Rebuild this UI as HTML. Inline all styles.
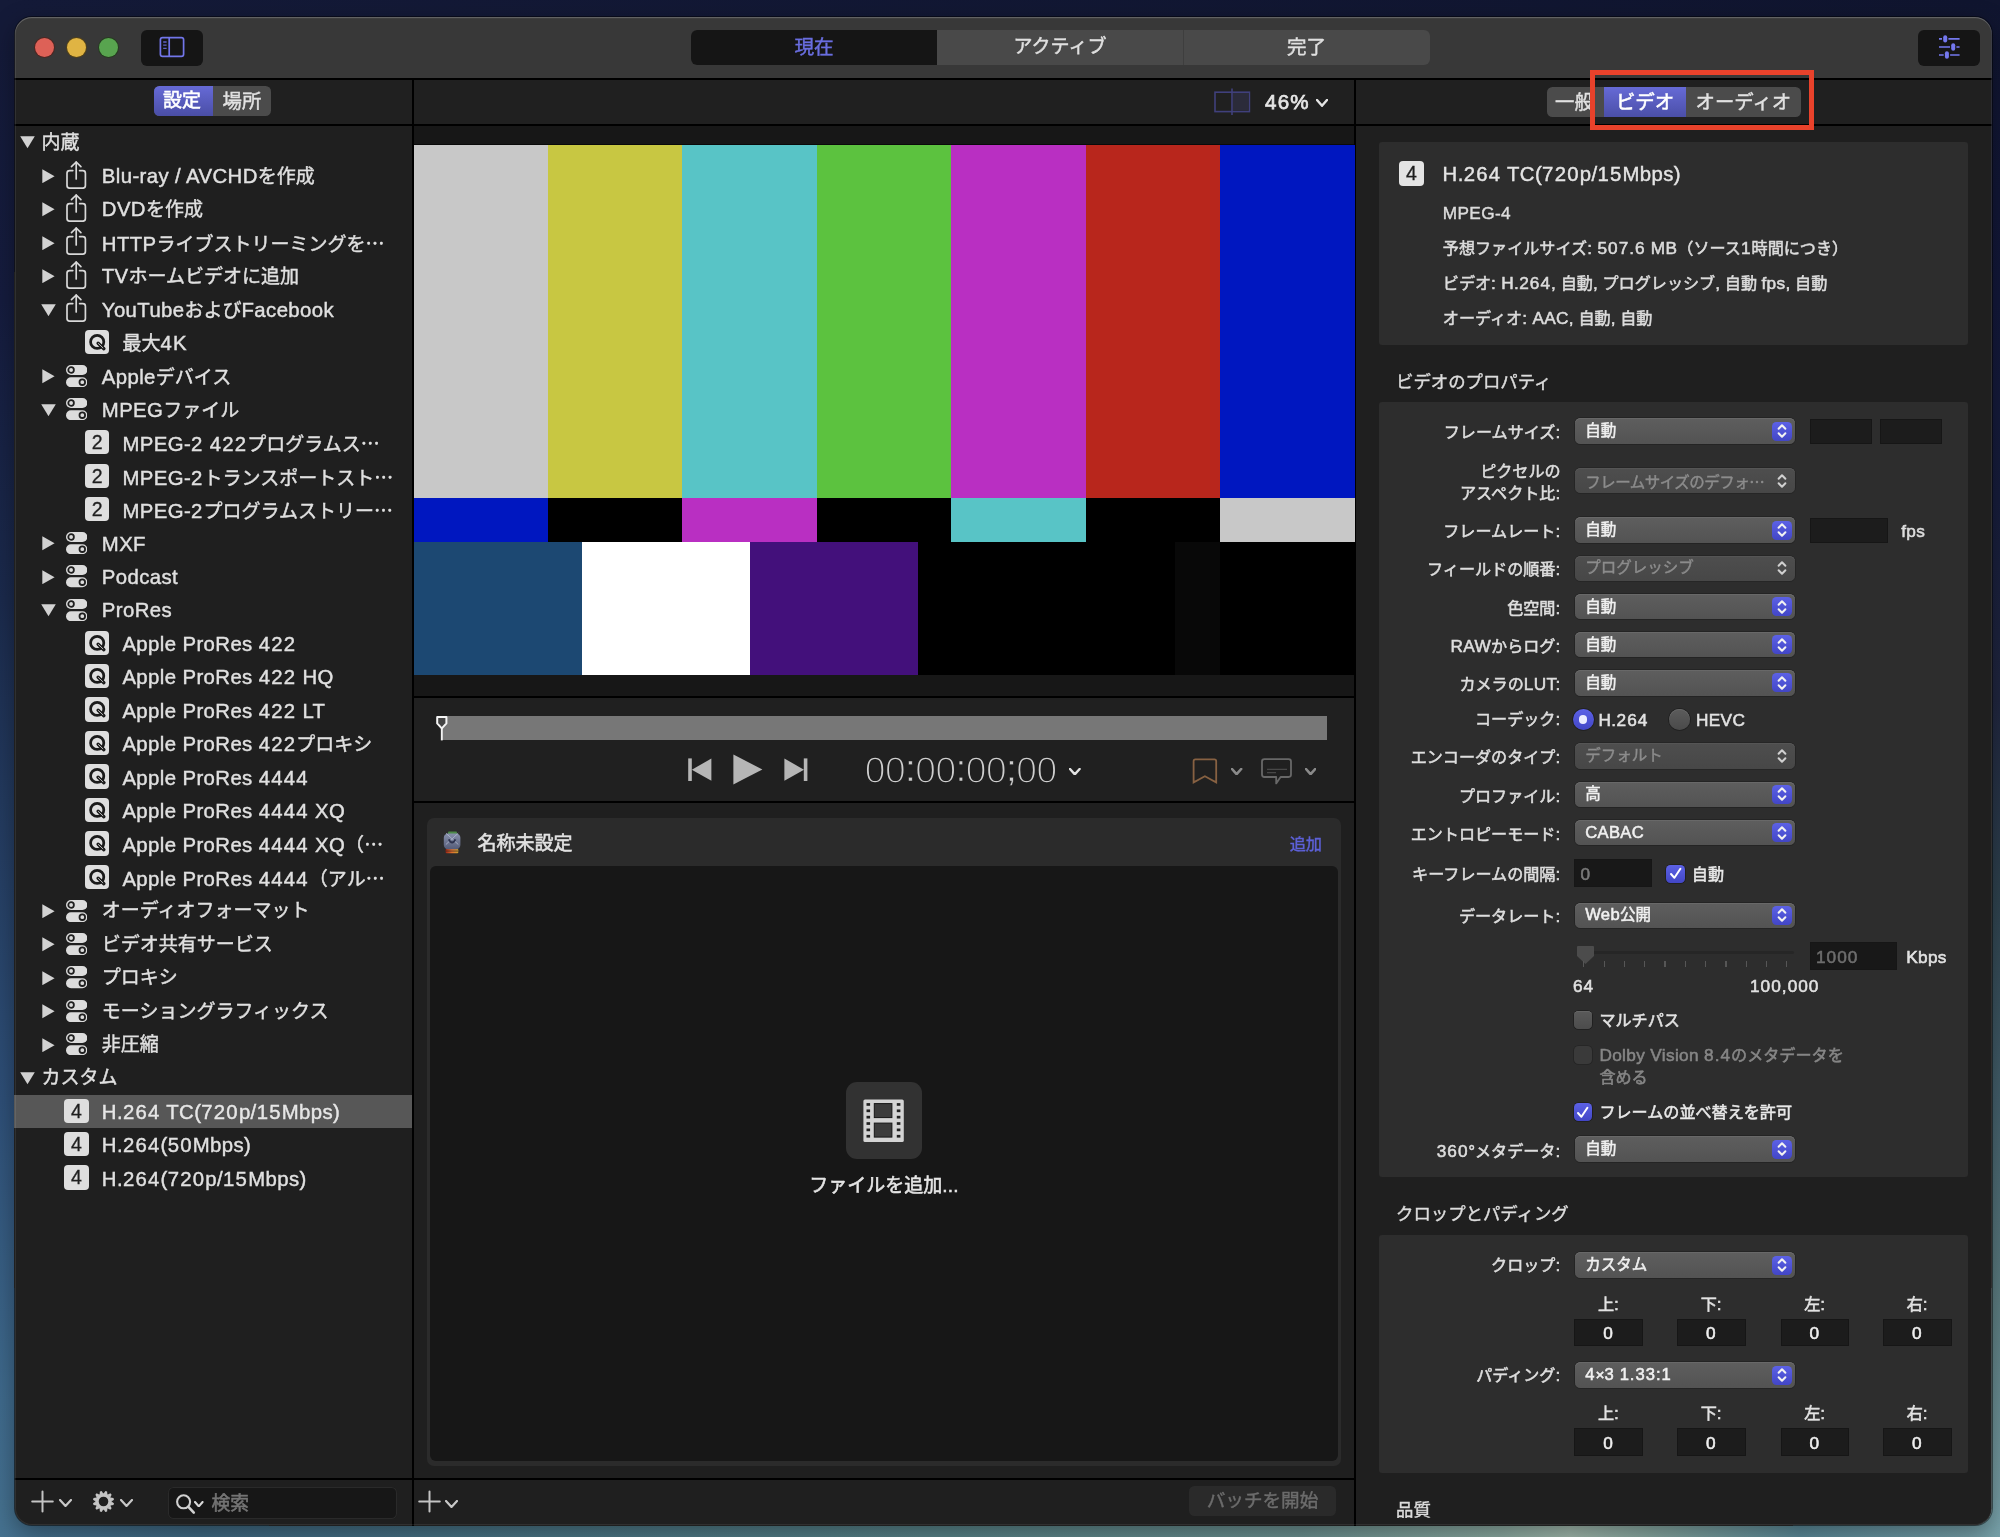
<!DOCTYPE html>
<html lang="ja"><head><meta charset="utf-8"><title>Compressor</title><style>
html,body{margin:0;padding:0;background:#14193a;}
body{width:2000px;height:1537px;overflow:hidden;position:relative;font-family:"Liberation Sans","Noto Sans CJK JP",sans-serif;}
#wall{position:absolute;left:0;top:0;width:2000px;height:1537px;
 background:linear-gradient(to bottom,#141a38 0px,#151c3e 300px,#1b2a4c 600px,#233a5e 800px,#2e4f77 1100px,#3f6a8c 1400px,#44708f 1537px);}
#wallt{position:absolute;left:0;top:0;width:2000px;height:40px;background:linear-gradient(to right,#141a38,#10152f);}
#wallr{position:absolute;left:1960px;top:0;width:40px;height:1537px;background:linear-gradient(to bottom,#10152f 0px,#13183a 300px,#171d3c 500px,#20263f 700px,#2f434f 900px,#44606c 1100px,#5d7e82 1300px,#7ba3aa 1537px);}
#wallb{position:absolute;left:0;top:1500px;width:2000px;height:37px;background:linear-gradient(to right,#45718f 0px,#3e6882 200px,#4a7585 550px,#588388 950px,#6b9090 1300px,#8aa9a0 1500px,#a0b8ac 1570px,#86a7a0 1650px,#5b8a99 1800px,#78a2aa 2000px);}
#shadow{position:absolute;left:14.7px;top:17px;width:1977px;height:1508.2px;border-radius:17px;box-shadow:0 8px 24px rgba(0,0,0,.36),0 0 0 1px rgba(0,0,0,.45);}
#win{will-change:transform;position:absolute;left:0;top:0;width:2000px;height:1537px;clip-path:inset(17px 8.3px 11.8px 14.7px round 17px);background:#1f1f1f;}
#win div,#win svg{position:absolute;}
#win span{position:static;}
#edge{position:absolute;left:14.7px;top:17px;width:1977px;height:1508.2px;border-radius:17px;box-shadow:inset 0 1.2px 0 rgba(255,255,255,.15),inset 0 0 0 1px rgba(255,255,255,.08);pointer-events:none;}
.t{white-space:nowrap;-webkit-text-stroke:.42px currentColor;}
.a{font-size:1.07em;letter-spacing:.02em;}
.a i{font-style:normal;letter-spacing:.06em;}
.e{font-family:"Noto Sans CJK JP",sans-serif;}
.m{-webkit-text-stroke:.55px currentColor;}
.tc{-webkit-text-stroke:1.5px #202020;}
.tc b{font-weight:normal;position:relative;top:-2.2px;-webkit-text-stroke:.5px #202020;}
.b{-webkit-text-stroke:.75px currentColor;}
.bd{text-align:center;}
.bn{display:block;font-size:19.5px;line-height:25.4px;color:#1e1e1e;-webkit-text-stroke:.3px #1e1e1e;text-align:center;width:100%;}
</style></head><body>
<div id="wall"></div><div id="wallt"></div><div id="wallr"></div><div id="wallb"></div><div id="shadow"></div>
<div id="win">
<div style="left:0px;top:17px;width:2000px;height:61.2px;background:#383838;"></div>
<div style="left:0px;top:78px;width:2000px;height:1.7px;background:#000;"></div>
<div style="left:0px;top:79.7px;width:2000px;height:44.4px;background:#202020;"></div>
<div style="left:0px;top:124px;width:2000px;height:1.7px;background:#000;"></div>
<div style="left:412px;top:79.7px;width:1.7px;height:1446px;background:#000;"></div>
<div style="left:1354.4px;top:79.7px;width:1.7px;height:1446px;background:#000;"></div>
<div style="left:34.6px;top:38.1px;width:19.4px;height:19.4px;background:#dd6157;border-radius:50%;box-shadow:0 0 0 1px #4e2622;"></div>
<div style="left:66.5px;top:38.1px;width:19.4px;height:19.4px;background:#e0b443;border-radius:50%;box-shadow:0 0 0 1px #52421a;"></div>
<div style="left:98.5px;top:38.1px;width:19.4px;height:19.4px;background:#58a44f;border-radius:50%;box-shadow:0 0 0 1px #263c20;"></div>
<div style="left:141px;top:30.3px;width:62px;height:35.8px;background:#151515;border-radius:6px;"></div>
<svg style="left:159px;top:36px;" width="26" height="22" viewBox="0 0 26 22"><g fill="none" stroke="#7276ea" stroke-width="1.7"><rect x="1.4" y="1.6" width="23.2" height="18.8" rx="2.2"/><path d="M10.2 1.6 V20.4"/></g><g stroke="#5f63c8" stroke-width="1.3"><path d="M4.2 6 H7.6 M4.2 9.2 H7.6 M4.2 12.4 H7.6"/></g></svg>
<div style="left:690.8px;top:30px;width:739.4px;height:35.4px;background:#494949;border-radius:6px;overflow:hidden;"><div style="left:0;top:0;width:246.4px;height:36px;background:#151515"></div><div style="left:492.4px;top:0;width:1px;height:36px;background:#3e3e3e"></div></div>
<div class="t " style="left:614px;width:400px;text-align:center;top:31.8px;height:30px;line-height:30px;font-size:19.6px;color:#6a6ee0;">現在</div>
<div class="t " style="left:860px;width:400px;text-align:center;top:32px;height:30px;line-height:30px;font-size:19px;color:#e0e0e0;">アクティブ</div>
<div class="t " style="left:1106.5px;width:400px;text-align:center;top:31.8px;height:30px;line-height:30px;font-size:19.6px;color:#e0e0e0;">完了</div>
<div style="left:1918px;top:30.2px;width:62px;height:35.8px;background:#151515;border-radius:6px;"></div>
<svg style="left:1938.8px;top:33.9px;" width="21" height="27" viewBox="0 0 21 27"><g stroke="#7478ee" stroke-width="1.7" stroke-linecap="butt"><path d="M0 4.9 H3 M9.4 4.9 H20.6"/><path d="M0 13 H11 M17.4 13 H20.6"/><path d="M0 21 H4.7 M11.1 21 H20.6"/></g><rect x="4.2" y="1.2" width="4" height="7.4" rx="2" fill="#7478ee"/><rect x="12.2" y="9.3" width="4" height="7.4" rx="2" fill="#7478ee"/><rect x="5.9" y="17.3" width="4" height="7.4" rx="2" fill="#7478ee"/></svg>
<div style="left:154px;top:86px;width:117px;height:30px;background:#4b4b4b;border-radius:5.5px;overflow:hidden;"><div style="left:0;top:0;width:59.2px;height:30px;background:linear-gradient(#666ad6,#4a4ea6)"></div></div>
<div class="t m" style="left:142px;width:80px;text-align:center;top:85.6px;height:30px;line-height:30px;font-size:19px;color:#ffffff;">設定</div>
<div class="t " style="left:202px;width:80px;text-align:center;top:85.8px;height:30px;line-height:30px;font-size:19.4px;color:#e2e2e2;">場所</div>
<svg style="left:20.2px;top:136.4px;" width="15" height="12.4" viewBox="0 0 15 12.4"><path d="M0.2 0.2 L14.8 0.2 L7.5 12.2Z" fill="#d2d2d2"/></svg>
<div class="t " style="left:41.6px;top:127.6px;height:30px;line-height:30px;font-size:19px;color:#e0e0e0;">内蔵</div>
<svg style="left:42.4px;top:168.82px;" width="13" height="14.4" viewBox="0 0 13 14.4"><path d="M0.3 0.2 L12.6 7.2 L0.3 14.2Z" fill="#d2d2d2"/></svg>
<svg style="left:65.9px;top:160.62px;" width="21" height="28.4" viewBox="0 0 21 28.4"><g fill="none" stroke="#d8d8d8" stroke-width="1.7" stroke-linecap="round" stroke-linejoin="round"><path d="M6.8 9.6 H3.6 Q1 9.6 1 12.2 V24.6 Q1 27.2 3.6 27.2 H16.8 Q19.4 27.2 19.4 24.6 V12.2 Q19.4 9.6 16.8 9.6 H13.6"/><path d="M10.2 1.2 V18"/><path d="M5.5 5.6 L10.2 1 L14.9 5.6"/></g></svg>
<div class="t " style="left:101.8px;top:161.02px;height:30px;line-height:30px;font-size:19px;color:#e0e0e0;"><span class="a">Blu-ray / AVCHD</span>を作成</div>
<svg style="left:42.4px;top:202.24px;" width="13" height="14.4" viewBox="0 0 13 14.4"><path d="M0.3 0.2 L12.6 7.2 L0.3 14.2Z" fill="#d2d2d2"/></svg>
<svg style="left:65.9px;top:194.04px;" width="21" height="28.4" viewBox="0 0 21 28.4"><g fill="none" stroke="#d8d8d8" stroke-width="1.7" stroke-linecap="round" stroke-linejoin="round"><path d="M6.8 9.6 H3.6 Q1 9.6 1 12.2 V24.6 Q1 27.2 3.6 27.2 H16.8 Q19.4 27.2 19.4 24.6 V12.2 Q19.4 9.6 16.8 9.6 H13.6"/><path d="M10.2 1.2 V18"/><path d="M5.5 5.6 L10.2 1 L14.9 5.6"/></g></svg>
<div class="t " style="left:101.8px;top:194.44px;height:30px;line-height:30px;font-size:19px;color:#e0e0e0;"><span class="a">DVD</span>を作成</div>
<svg style="left:42.4px;top:235.66px;" width="13" height="14.4" viewBox="0 0 13 14.4"><path d="M0.3 0.2 L12.6 7.2 L0.3 14.2Z" fill="#d2d2d2"/></svg>
<svg style="left:65.9px;top:227.46px;" width="21" height="28.4" viewBox="0 0 21 28.4"><g fill="none" stroke="#d8d8d8" stroke-width="1.7" stroke-linecap="round" stroke-linejoin="round"><path d="M6.8 9.6 H3.6 Q1 9.6 1 12.2 V24.6 Q1 27.2 3.6 27.2 H16.8 Q19.4 27.2 19.4 24.6 V12.2 Q19.4 9.6 16.8 9.6 H13.6"/><path d="M10.2 1.2 V18"/><path d="M5.5 5.6 L10.2 1 L14.9 5.6"/></g></svg>
<div class="t " style="left:101.8px;top:227.86px;height:30px;line-height:30px;font-size:19px;color:#e0e0e0;"><span class="a">HTTP</span>ライブストリーミングを<span class="e">…</span></div>
<svg style="left:42.4px;top:269.08px;" width="13" height="14.4" viewBox="0 0 13 14.4"><path d="M0.3 0.2 L12.6 7.2 L0.3 14.2Z" fill="#d2d2d2"/></svg>
<svg style="left:65.9px;top:260.88px;" width="21" height="28.4" viewBox="0 0 21 28.4"><g fill="none" stroke="#d8d8d8" stroke-width="1.7" stroke-linecap="round" stroke-linejoin="round"><path d="M6.8 9.6 H3.6 Q1 9.6 1 12.2 V24.6 Q1 27.2 3.6 27.2 H16.8 Q19.4 27.2 19.4 24.6 V12.2 Q19.4 9.6 16.8 9.6 H13.6"/><path d="M10.2 1.2 V18"/><path d="M5.5 5.6 L10.2 1 L14.9 5.6"/></g></svg>
<div class="t " style="left:101.8px;top:261.28px;height:30px;line-height:30px;font-size:19px;color:#e0e0e0;"><span class="a">TV</span>ホームビデオに追加</div>
<svg style="left:41.2px;top:303.7px;" width="15" height="12.4" viewBox="0 0 15 12.4"><path d="M0.2 0.2 L14.8 0.2 L7.5 12.2Z" fill="#d2d2d2"/></svg>
<svg style="left:65.9px;top:294.3px;" width="21" height="28.4" viewBox="0 0 21 28.4"><g fill="none" stroke="#d8d8d8" stroke-width="1.7" stroke-linecap="round" stroke-linejoin="round"><path d="M6.8 9.6 H3.6 Q1 9.6 1 12.2 V24.6 Q1 27.2 3.6 27.2 H16.8 Q19.4 27.2 19.4 24.6 V12.2 Q19.4 9.6 16.8 9.6 H13.6"/><path d="M10.2 1.2 V18"/><path d="M5.5 5.6 L10.2 1 L14.9 5.6"/></g></svg>
<div class="t " style="left:101.8px;top:294.7px;height:30px;line-height:30px;font-size:19px;color:#e0e0e0;"><span class="a">YouTube</span>および<span class="a">Facebook</span></div>
<div style="left:85px;top:329.82px;width:24.4px;height:24.4px;background:#dedede;border-radius:4px;"><svg width="24.4" height="24.4" viewBox="0 0 24 24" style="left:0;top:0"><circle cx="12" cy="11.7" r="6.5" fill="none" stroke="#1a1a1a" stroke-width="2.7"/><path d="M12.9 13 L18.6 18.4" stroke="#1a1a1a" stroke-width="3.3" stroke-linecap="round"/><path d="M13.2 13.3 L17.6 17.5" stroke="#dedede" stroke-width="0.8" stroke-linecap="round"/></svg></div>
<div class="t " style="left:122.4px;top:328.12px;height:30px;line-height:30px;font-size:19px;color:#e0e0e0;">最大<span class="a"><i>4</i>K</span></div>
<svg style="left:42.4px;top:369.34px;" width="13" height="14.4" viewBox="0 0 13 14.4"><path d="M0.3 0.2 L12.6 7.2 L0.3 14.2Z" fill="#d2d2d2"/></svg>
<svg style="left:65.8px;top:364.84px;" width="21.4" height="22.2" viewBox="0 0 21.4 22.2"><rect x="0" y="0" width="21.4" height="10" rx="5" fill="#dcdcdc"/><rect x="0" y="12.2" width="21.4" height="10" rx="5" fill="#dcdcdc"/><circle cx="5.1" cy="5" r="2.8" fill="none" stroke="#1f1f1f" stroke-width="1.8"/><circle cx="16.3" cy="17.2" r="2.8" fill="none" stroke="#1f1f1f" stroke-width="1.8"/></svg>
<div class="t " style="left:101.8px;top:361.54px;height:30px;line-height:30px;font-size:19px;color:#e0e0e0;"><span class="a">Apple</span>デバイス</div>
<svg style="left:41.2px;top:403.96px;" width="15" height="12.4" viewBox="0 0 15 12.4"><path d="M0.2 0.2 L14.8 0.2 L7.5 12.2Z" fill="#d2d2d2"/></svg>
<svg style="left:65.8px;top:398.26px;" width="21.4" height="22.2" viewBox="0 0 21.4 22.2"><rect x="0" y="0" width="21.4" height="10" rx="5" fill="#dcdcdc"/><rect x="0" y="12.2" width="21.4" height="10" rx="5" fill="#dcdcdc"/><circle cx="5.1" cy="5" r="2.8" fill="none" stroke="#1f1f1f" stroke-width="1.8"/><circle cx="16.3" cy="17.2" r="2.8" fill="none" stroke="#1f1f1f" stroke-width="1.8"/></svg>
<div class="t " style="left:101.8px;top:394.96px;height:30px;line-height:30px;font-size:19px;color:#e0e0e0;"><span class="a">MPEG</span>ファイル</div>
<div class="bd" style="left:85px;top:430.08px;width:24.4px;height:24.4px;background:#dedede;border-radius:4px;"><span class="bn">2</span></div>
<div class="t " style="left:122.4px;top:428.38px;height:30px;line-height:30px;font-size:19px;color:#e0e0e0;"><span class="a">MPEG-<i>2</i> <i>422</i></span>プログラムス<span class="e">…</span></div>
<div class="bd" style="left:85px;top:463.5px;width:24.4px;height:24.4px;background:#dedede;border-radius:4px;"><span class="bn">2</span></div>
<div class="t " style="left:122.4px;top:461.8px;height:30px;line-height:30px;font-size:19px;color:#e0e0e0;"><span class="a">MPEG-<i>2</i></span>トランスポートスト<span class="e">…</span></div>
<div class="bd" style="left:85px;top:496.92px;width:24.4px;height:24.4px;background:#dedede;border-radius:4px;"><span class="bn">2</span></div>
<div class="t " style="left:122.4px;top:495.22px;height:30px;line-height:30px;font-size:19px;color:#e0e0e0;"><span class="a">MPEG-<i>2</i></span>プログラムストリー<span class="e">…</span></div>
<svg style="left:42.4px;top:536.44px;" width="13" height="14.4" viewBox="0 0 13 14.4"><path d="M0.3 0.2 L12.6 7.2 L0.3 14.2Z" fill="#d2d2d2"/></svg>
<svg style="left:65.8px;top:531.94px;" width="21.4" height="22.2" viewBox="0 0 21.4 22.2"><rect x="0" y="0" width="21.4" height="10" rx="5" fill="#dcdcdc"/><rect x="0" y="12.2" width="21.4" height="10" rx="5" fill="#dcdcdc"/><circle cx="5.1" cy="5" r="2.8" fill="none" stroke="#1f1f1f" stroke-width="1.8"/><circle cx="16.3" cy="17.2" r="2.8" fill="none" stroke="#1f1f1f" stroke-width="1.8"/></svg>
<div class="t " style="left:101.8px;top:528.64px;height:30px;line-height:30px;font-size:19px;color:#e0e0e0;"><span class="a">MXF</span></div>
<svg style="left:42.4px;top:569.86px;" width="13" height="14.4" viewBox="0 0 13 14.4"><path d="M0.3 0.2 L12.6 7.2 L0.3 14.2Z" fill="#d2d2d2"/></svg>
<svg style="left:65.8px;top:565.36px;" width="21.4" height="22.2" viewBox="0 0 21.4 22.2"><rect x="0" y="0" width="21.4" height="10" rx="5" fill="#dcdcdc"/><rect x="0" y="12.2" width="21.4" height="10" rx="5" fill="#dcdcdc"/><circle cx="5.1" cy="5" r="2.8" fill="none" stroke="#1f1f1f" stroke-width="1.8"/><circle cx="16.3" cy="17.2" r="2.8" fill="none" stroke="#1f1f1f" stroke-width="1.8"/></svg>
<div class="t " style="left:101.8px;top:562.06px;height:30px;line-height:30px;font-size:19px;color:#e0e0e0;"><span class="a">Podcast</span></div>
<svg style="left:41.2px;top:604.48px;" width="15" height="12.4" viewBox="0 0 15 12.4"><path d="M0.2 0.2 L14.8 0.2 L7.5 12.2Z" fill="#d2d2d2"/></svg>
<svg style="left:65.8px;top:598.78px;" width="21.4" height="22.2" viewBox="0 0 21.4 22.2"><rect x="0" y="0" width="21.4" height="10" rx="5" fill="#dcdcdc"/><rect x="0" y="12.2" width="21.4" height="10" rx="5" fill="#dcdcdc"/><circle cx="5.1" cy="5" r="2.8" fill="none" stroke="#1f1f1f" stroke-width="1.8"/><circle cx="16.3" cy="17.2" r="2.8" fill="none" stroke="#1f1f1f" stroke-width="1.8"/></svg>
<div class="t " style="left:101.8px;top:595.48px;height:30px;line-height:30px;font-size:19px;color:#e0e0e0;"><span class="a">ProRes</span></div>
<div style="left:85px;top:630.6px;width:24.4px;height:24.4px;background:#dedede;border-radius:4px;"><svg width="24.4" height="24.4" viewBox="0 0 24 24" style="left:0;top:0"><circle cx="12" cy="11.7" r="6.5" fill="none" stroke="#1a1a1a" stroke-width="2.7"/><path d="M12.9 13 L18.6 18.4" stroke="#1a1a1a" stroke-width="3.3" stroke-linecap="round"/><path d="M13.2 13.3 L17.6 17.5" stroke="#dedede" stroke-width="0.8" stroke-linecap="round"/></svg></div>
<div class="t " style="left:122.4px;top:628.9px;height:30px;line-height:30px;font-size:19px;color:#e0e0e0;"><span class="a">Apple ProRes <i>422</i></span></div>
<div style="left:85px;top:664.02px;width:24.4px;height:24.4px;background:#dedede;border-radius:4px;"><svg width="24.4" height="24.4" viewBox="0 0 24 24" style="left:0;top:0"><circle cx="12" cy="11.7" r="6.5" fill="none" stroke="#1a1a1a" stroke-width="2.7"/><path d="M12.9 13 L18.6 18.4" stroke="#1a1a1a" stroke-width="3.3" stroke-linecap="round"/><path d="M13.2 13.3 L17.6 17.5" stroke="#dedede" stroke-width="0.8" stroke-linecap="round"/></svg></div>
<div class="t " style="left:122.4px;top:662.32px;height:30px;line-height:30px;font-size:19px;color:#e0e0e0;"><span class="a">Apple ProRes <i>422</i> HQ</span></div>
<div style="left:85px;top:697.44px;width:24.4px;height:24.4px;background:#dedede;border-radius:4px;"><svg width="24.4" height="24.4" viewBox="0 0 24 24" style="left:0;top:0"><circle cx="12" cy="11.7" r="6.5" fill="none" stroke="#1a1a1a" stroke-width="2.7"/><path d="M12.9 13 L18.6 18.4" stroke="#1a1a1a" stroke-width="3.3" stroke-linecap="round"/><path d="M13.2 13.3 L17.6 17.5" stroke="#dedede" stroke-width="0.8" stroke-linecap="round"/></svg></div>
<div class="t " style="left:122.4px;top:695.74px;height:30px;line-height:30px;font-size:19px;color:#e0e0e0;"><span class="a">Apple ProRes <i>422</i> LT</span></div>
<div style="left:85px;top:730.86px;width:24.4px;height:24.4px;background:#dedede;border-radius:4px;"><svg width="24.4" height="24.4" viewBox="0 0 24 24" style="left:0;top:0"><circle cx="12" cy="11.7" r="6.5" fill="none" stroke="#1a1a1a" stroke-width="2.7"/><path d="M12.9 13 L18.6 18.4" stroke="#1a1a1a" stroke-width="3.3" stroke-linecap="round"/><path d="M13.2 13.3 L17.6 17.5" stroke="#dedede" stroke-width="0.8" stroke-linecap="round"/></svg></div>
<div class="t " style="left:122.4px;top:729.16px;height:30px;line-height:30px;font-size:19px;color:#e0e0e0;"><span class="a">Apple ProRes <i>422</i></span>プロキシ</div>
<div style="left:85px;top:764.28px;width:24.4px;height:24.4px;background:#dedede;border-radius:4px;"><svg width="24.4" height="24.4" viewBox="0 0 24 24" style="left:0;top:0"><circle cx="12" cy="11.7" r="6.5" fill="none" stroke="#1a1a1a" stroke-width="2.7"/><path d="M12.9 13 L18.6 18.4" stroke="#1a1a1a" stroke-width="3.3" stroke-linecap="round"/><path d="M13.2 13.3 L17.6 17.5" stroke="#dedede" stroke-width="0.8" stroke-linecap="round"/></svg></div>
<div class="t " style="left:122.4px;top:762.58px;height:30px;line-height:30px;font-size:19px;color:#e0e0e0;"><span class="a">Apple ProRes <i>4444</i></span></div>
<div style="left:85px;top:797.7px;width:24.4px;height:24.4px;background:#dedede;border-radius:4px;"><svg width="24.4" height="24.4" viewBox="0 0 24 24" style="left:0;top:0"><circle cx="12" cy="11.7" r="6.5" fill="none" stroke="#1a1a1a" stroke-width="2.7"/><path d="M12.9 13 L18.6 18.4" stroke="#1a1a1a" stroke-width="3.3" stroke-linecap="round"/><path d="M13.2 13.3 L17.6 17.5" stroke="#dedede" stroke-width="0.8" stroke-linecap="round"/></svg></div>
<div class="t " style="left:122.4px;top:796px;height:30px;line-height:30px;font-size:19px;color:#e0e0e0;"><span class="a">Apple ProRes <i>4444</i> XQ</span></div>
<div style="left:85px;top:831.12px;width:24.4px;height:24.4px;background:#dedede;border-radius:4px;"><svg width="24.4" height="24.4" viewBox="0 0 24 24" style="left:0;top:0"><circle cx="12" cy="11.7" r="6.5" fill="none" stroke="#1a1a1a" stroke-width="2.7"/><path d="M12.9 13 L18.6 18.4" stroke="#1a1a1a" stroke-width="3.3" stroke-linecap="round"/><path d="M13.2 13.3 L17.6 17.5" stroke="#dedede" stroke-width="0.8" stroke-linecap="round"/></svg></div>
<div class="t " style="left:122.4px;top:829.42px;height:30px;line-height:30px;font-size:19px;color:#e0e0e0;"><span class="a">Apple ProRes <i>4444</i> XQ</span>（<span class="e">…</span></div>
<div style="left:85px;top:864.54px;width:24.4px;height:24.4px;background:#dedede;border-radius:4px;"><svg width="24.4" height="24.4" viewBox="0 0 24 24" style="left:0;top:0"><circle cx="12" cy="11.7" r="6.5" fill="none" stroke="#1a1a1a" stroke-width="2.7"/><path d="M12.9 13 L18.6 18.4" stroke="#1a1a1a" stroke-width="3.3" stroke-linecap="round"/><path d="M13.2 13.3 L17.6 17.5" stroke="#dedede" stroke-width="0.8" stroke-linecap="round"/></svg></div>
<div class="t " style="left:122.4px;top:862.84px;height:30px;line-height:30px;font-size:19px;color:#e0e0e0;"><span class="a">Apple ProRes <i>4444</i></span>（アル<span class="e">…</span></div>
<svg style="left:42.4px;top:904.06px;" width="13" height="14.4" viewBox="0 0 13 14.4"><path d="M0.3 0.2 L12.6 7.2 L0.3 14.2Z" fill="#d2d2d2"/></svg>
<svg style="left:65.8px;top:899.56px;" width="21.4" height="22.2" viewBox="0 0 21.4 22.2"><rect x="0" y="0" width="21.4" height="10" rx="5" fill="#dcdcdc"/><rect x="0" y="12.2" width="21.4" height="10" rx="5" fill="#dcdcdc"/><circle cx="5.1" cy="5" r="2.8" fill="none" stroke="#1f1f1f" stroke-width="1.8"/><circle cx="16.3" cy="17.2" r="2.8" fill="none" stroke="#1f1f1f" stroke-width="1.8"/></svg>
<div class="t " style="left:101.8px;top:896.26px;height:30px;line-height:30px;font-size:19px;color:#e0e0e0;">オーディオフォーマット</div>
<svg style="left:42.4px;top:937.48px;" width="13" height="14.4" viewBox="0 0 13 14.4"><path d="M0.3 0.2 L12.6 7.2 L0.3 14.2Z" fill="#d2d2d2"/></svg>
<svg style="left:65.8px;top:932.98px;" width="21.4" height="22.2" viewBox="0 0 21.4 22.2"><rect x="0" y="0" width="21.4" height="10" rx="5" fill="#dcdcdc"/><rect x="0" y="12.2" width="21.4" height="10" rx="5" fill="#dcdcdc"/><circle cx="5.1" cy="5" r="2.8" fill="none" stroke="#1f1f1f" stroke-width="1.8"/><circle cx="16.3" cy="17.2" r="2.8" fill="none" stroke="#1f1f1f" stroke-width="1.8"/></svg>
<div class="t " style="left:101.8px;top:929.68px;height:30px;line-height:30px;font-size:19px;color:#e0e0e0;">ビデオ共有サービス</div>
<svg style="left:42.4px;top:970.9px;" width="13" height="14.4" viewBox="0 0 13 14.4"><path d="M0.3 0.2 L12.6 7.2 L0.3 14.2Z" fill="#d2d2d2"/></svg>
<svg style="left:65.8px;top:966.4px;" width="21.4" height="22.2" viewBox="0 0 21.4 22.2"><rect x="0" y="0" width="21.4" height="10" rx="5" fill="#dcdcdc"/><rect x="0" y="12.2" width="21.4" height="10" rx="5" fill="#dcdcdc"/><circle cx="5.1" cy="5" r="2.8" fill="none" stroke="#1f1f1f" stroke-width="1.8"/><circle cx="16.3" cy="17.2" r="2.8" fill="none" stroke="#1f1f1f" stroke-width="1.8"/></svg>
<div class="t " style="left:101.8px;top:963.1px;height:30px;line-height:30px;font-size:19px;color:#e0e0e0;">プロキシ</div>
<svg style="left:42.4px;top:1004.32px;" width="13" height="14.4" viewBox="0 0 13 14.4"><path d="M0.3 0.2 L12.6 7.2 L0.3 14.2Z" fill="#d2d2d2"/></svg>
<svg style="left:65.8px;top:999.82px;" width="21.4" height="22.2" viewBox="0 0 21.4 22.2"><rect x="0" y="0" width="21.4" height="10" rx="5" fill="#dcdcdc"/><rect x="0" y="12.2" width="21.4" height="10" rx="5" fill="#dcdcdc"/><circle cx="5.1" cy="5" r="2.8" fill="none" stroke="#1f1f1f" stroke-width="1.8"/><circle cx="16.3" cy="17.2" r="2.8" fill="none" stroke="#1f1f1f" stroke-width="1.8"/></svg>
<div class="t " style="left:101.8px;top:996.52px;height:30px;line-height:30px;font-size:19px;color:#e0e0e0;">モーショングラフィックス</div>
<svg style="left:42.4px;top:1037.74px;" width="13" height="14.4" viewBox="0 0 13 14.4"><path d="M0.3 0.2 L12.6 7.2 L0.3 14.2Z" fill="#d2d2d2"/></svg>
<svg style="left:65.8px;top:1033.24px;" width="21.4" height="22.2" viewBox="0 0 21.4 22.2"><rect x="0" y="0" width="21.4" height="10" rx="5" fill="#dcdcdc"/><rect x="0" y="12.2" width="21.4" height="10" rx="5" fill="#dcdcdc"/><circle cx="5.1" cy="5" r="2.8" fill="none" stroke="#1f1f1f" stroke-width="1.8"/><circle cx="16.3" cy="17.2" r="2.8" fill="none" stroke="#1f1f1f" stroke-width="1.8"/></svg>
<div class="t " style="left:101.8px;top:1029.94px;height:30px;line-height:30px;font-size:19px;color:#e0e0e0;">非圧縮</div>
<svg style="left:20.2px;top:1072.16px;" width="15" height="12.4" viewBox="0 0 15 12.4"><path d="M0.2 0.2 L14.8 0.2 L7.5 12.2Z" fill="#d2d2d2"/></svg>
<div class="t " style="left:41.6px;top:1063.36px;height:30px;line-height:30px;font-size:19px;color:#e0e0e0;">カスタム</div>
<div style="left:14px;top:1094.6px;width:398px;height:33.4px;background:#575757;"></div>
<div class="bd" style="left:64.2px;top:1098.58px;width:24.4px;height:24.4px;background:#dedede;border-radius:4px;"><span class="bn">4</span></div>
<div class="t " style="left:101.8px;top:1096.78px;height:30px;line-height:30px;font-size:19px;color:#e6e6e6;"><span class="a">H.<i>264</i> TC(<i>720</i>p/<i>15</i>Mbps)</span></div>
<div class="bd" style="left:64.2px;top:1132px;width:24.4px;height:24.4px;background:#dedede;border-radius:4px;"><span class="bn">4</span></div>
<div class="t " style="left:101.8px;top:1130.2px;height:30px;line-height:30px;font-size:19px;color:#e0e0e0;"><span class="a">H.<i>264</i>(<i>50</i>Mbps)</span></div>
<div class="bd" style="left:64.2px;top:1165.42px;width:24.4px;height:24.4px;background:#dedede;border-radius:4px;"><span class="bn">4</span></div>
<div class="t " style="left:101.8px;top:1163.62px;height:30px;line-height:30px;font-size:19px;color:#e0e0e0;"><span class="a">H.<i>264</i>(<i>720</i>p/<i>15</i>Mbps)</span></div>
<div style="left:0px;top:1478px;width:412px;height:1.7px;background:#000;"></div>
<svg style="left:31.3px;top:1489.7px;" width="23" height="23" viewBox="0 0 23 23"><path d="M11.5 1.4 V21.6 M1.2 11.5 H21.8" stroke="#c4c4c4" stroke-width="2" stroke-linecap="round"/></svg>
<svg style="left:59.3px;top:1499.2px;" width="13" height="8" viewBox="0 0 13 8"><path d="M1 1 L6.5 7 L12 1" fill="none" stroke="#c8c8c8" stroke-width="2.2" stroke-linecap="round" stroke-linejoin="round"/></svg>
<svg style="left:91.8px;top:1489.7px;" width="23" height="23" viewBox="0 0 23 23"><g transform="translate(11.5,11.5)"><circle r="6.5" fill="none" stroke="#c4c4c4" stroke-width="3.4"/><path d="M-2 -7.6 L-0.9 -10.6 H0.9 L2 -7.6Z" fill="#c4c4c4" transform="rotate(15)"/><path d="M-2 -7.6 L-0.9 -10.6 H0.9 L2 -7.6Z" fill="#c4c4c4" transform="rotate(45)"/><path d="M-2 -7.6 L-0.9 -10.6 H0.9 L2 -7.6Z" fill="#c4c4c4" transform="rotate(75)"/><path d="M-2 -7.6 L-0.9 -10.6 H0.9 L2 -7.6Z" fill="#c4c4c4" transform="rotate(105)"/><path d="M-2 -7.6 L-0.9 -10.6 H0.9 L2 -7.6Z" fill="#c4c4c4" transform="rotate(135)"/><path d="M-2 -7.6 L-0.9 -10.6 H0.9 L2 -7.6Z" fill="#c4c4c4" transform="rotate(165)"/><path d="M-2 -7.6 L-0.9 -10.6 H0.9 L2 -7.6Z" fill="#c4c4c4" transform="rotate(195)"/><path d="M-2 -7.6 L-0.9 -10.6 H0.9 L2 -7.6Z" fill="#c4c4c4" transform="rotate(225)"/><path d="M-2 -7.6 L-0.9 -10.6 H0.9 L2 -7.6Z" fill="#c4c4c4" transform="rotate(255)"/><path d="M-2 -7.6 L-0.9 -10.6 H0.9 L2 -7.6Z" fill="#c4c4c4" transform="rotate(285)"/><path d="M-2 -7.6 L-0.9 -10.6 H0.9 L2 -7.6Z" fill="#c4c4c4" transform="rotate(315)"/><path d="M-2 -7.6 L-0.9 -10.6 H0.9 L2 -7.6Z" fill="#c4c4c4" transform="rotate(345)"/></g></svg>
<svg style="left:119.7px;top:1499.2px;" width="13" height="8" viewBox="0 0 13 8"><path d="M1 1 L6.5 7 L12 1" fill="none" stroke="#c8c8c8" stroke-width="2.2" stroke-linecap="round" stroke-linejoin="round"/></svg>
<div style="left:168.4px;top:1487.3px;width:228.4px;height:32.2px;background:#171717;border-radius:5.5px;box-shadow:inset 0 0 0 1px #2a2a2a;"></div>
<svg style="left:174.5px;top:1492.5px;" width="22" height="22" viewBox="0 0 22 22"><circle cx="8.6" cy="8.8" r="6.5" fill="none" stroke="#d0d0d0" stroke-width="2.1"/><path d="M13.4 13.8 L18.8 19.6" stroke="#d0d0d0" stroke-width="2.6" stroke-linecap="round"/></svg>
<svg style="left:194px;top:1500.6px;" width="9.6" height="6.4" viewBox="0 0 9.6 6.4"><path d="M1 1 L4.8 5.4 L8.6 1" fill="none" stroke="#d8d8d8" stroke-width="2.1" stroke-linecap="round" stroke-linejoin="round"/></svg>
<div class="t m" style="left:211.6px;top:1488.6px;height:30px;line-height:30px;font-size:18.8px;color:#747474;">検索</div>
<svg style="left:1213.5px;top:87.5px;" width="37" height="28" viewBox="0 0 37 28"><rect x="1" y="4.2" width="34.4" height="19.4" fill="none" stroke="#40407c" stroke-width="1.6"/><rect x="18.8" y="5" width="15.8" height="17.8" fill="#2b2b3a"/><path d="M18 0.6 V27" stroke="#40407c" stroke-width="1.6"/></svg>
<div class="t b" style="left:1265px;top:87.2px;height:30px;line-height:30px;font-size:19.2px;color:#e6e6e6;"><span class="a"><i>46</i>%</span></div>
<svg style="left:1315.5px;top:98.9px;" width="12" height="7.8" viewBox="0 0 12 7.8"><path d="M1 1 L6 6.8 L11 1" fill="none" stroke="#e4e4e4" stroke-width="2.4" stroke-linecap="round" stroke-linejoin="round"/></svg>
<div style="left:413.7px;top:125.7px;width:940.7px;height:570.5px;background:#171717;"></div>
<div style="left:413.7px;top:143.8px;width:940.7px;height:1.4px;background:#0a0a0a;"></div>
<div style="left:413.7px;top:145.2px;width:134.69px;height:353.4px;background:#c8c8c8;"></div>
<div style="left:548.09px;top:145.2px;width:134.69px;height:353.4px;background:#c8c742;"></div>
<div style="left:682.47px;top:145.2px;width:134.69px;height:353.4px;background:#58c4c6;"></div>
<div style="left:816.86px;top:145.2px;width:134.69px;height:353.4px;background:#5cc23f;"></div>
<div style="left:951.24px;top:145.2px;width:134.69px;height:353.4px;background:#b92fc2;"></div>
<div style="left:1085.63px;top:145.2px;width:134.69px;height:353.4px;background:#b8261c;"></div>
<div style="left:1220.01px;top:145.2px;width:134.69px;height:353.4px;background:#0017c0;"></div>
<div style="left:413.7px;top:498.4px;width:134.69px;height:43.8px;background:#0017c0;"></div>
<div style="left:548.09px;top:498.4px;width:134.69px;height:43.8px;background:#000000;"></div>
<div style="left:682.47px;top:498.4px;width:134.69px;height:43.8px;background:#b92fc2;"></div>
<div style="left:816.86px;top:498.4px;width:134.69px;height:43.8px;background:#000000;"></div>
<div style="left:951.24px;top:498.4px;width:134.69px;height:43.8px;background:#58c4c6;"></div>
<div style="left:1085.63px;top:498.4px;width:134.69px;height:43.8px;background:#000000;"></div>
<div style="left:1220.01px;top:498.4px;width:134.69px;height:43.8px;background:#c8c8c8;"></div>
<div style="left:413.7px;top:542px;width:168.28px;height:133px;background:#1c4872;"></div>
<div style="left:581.68px;top:542px;width:168.28px;height:133px;background:#ffffff;"></div>
<div style="left:749.66px;top:542px;width:168.28px;height:133px;background:#43107b;"></div>
<div style="left:917.65px;top:542px;width:168.28px;height:133px;background:#000000;"></div>
<div style="left:1085.63px;top:542px;width:268.77px;height:133px;background:#000;"></div>
<div style="left:1175.22px;top:542px;width:44.8px;height:133px;background:#080808;"></div>
<div style="left:413.7px;top:696px;width:940.7px;height:1.7px;background:#000;"></div>
<div style="left:413.7px;top:697.7px;width:940.7px;height:103.5px;background:#202020;"></div>
<div style="left:441.2px;top:715.8px;width:886px;height:24.4px;background:#777777;"></div>
<svg style="left:435.5px;top:715.6px;" width="12" height="26" viewBox="0 0 12 26"><path d="M1.2 1 H10.4 V7.4 L5.8 12.4 L1.2 7.4Z" fill="#444" stroke="#f4f4f4" stroke-width="2" stroke-linejoin="round"/><path d="M5.8 12 V24.4" stroke="#f4f4f4" stroke-width="1.9"/></svg>
<svg style="left:688.4px;top:758.2px;" width="24" height="23.4" viewBox="0 0 24 23.4"><rect x="0.2" y="0.4" width="3.6" height="22.6" fill="#b6b6b6"/><path d="M23.4 0.6 V22.8 L3.8 11.7Z" fill="#b6b6b6"/></svg>
<svg style="left:733px;top:754.2px;" width="30" height="31" viewBox="0 0 30 31"><path d="M0.4 0.4 L29.4 15.4 L0.4 30.4Z" fill="#b6b6b6"/></svg>
<svg style="left:784.4px;top:758.2px;" width="24" height="23.4" viewBox="0 0 24 23.4"><rect x="19.8" y="0.4" width="3.6" height="22.6" fill="#b6b6b6"/><path d="M0.4 0.6 V22.8 L20 11.7Z" fill="#b6b6b6"/></svg>
<div class="t tc" style="left:864.8px;top:747.8px;height:44px;line-height:44px;font-size:37.2px;color:#cecece;letter-spacing:-0.42px;">00<b>:</b>00<b>:</b>00<b>;</b>00</div>
<svg style="left:1069.4px;top:767.9px;" width="11.6" height="7.4" viewBox="0 0 11.6 7.4"><path d="M1 1 L5.8 6.4 L10.6 1" fill="none" stroke="#e2e2e2" stroke-width="2.4" stroke-linecap="round" stroke-linejoin="round"/></svg>
<svg style="left:1192.4px;top:757.6px;" width="26" height="27" viewBox="0 0 26 27"><path d="M3.4 1.4 H22.4 Q24.2 1.4 24.2 3.2 V24.4 L12.9 18.2 L1.6 24.4 V3.2 Q1.6 1.4 3.4 1.4Z" fill="none" stroke="#876142" stroke-width="1.8" stroke-linejoin="miter"/></svg>
<svg style="left:1231.4px;top:768px;" width="11.2" height="7.2" viewBox="0 0 11.2 7.2"><path d="M1 1 L5.6 6.2 L10.2 1" fill="none" stroke="#8a8a8a" stroke-width="2.6" stroke-linecap="round" stroke-linejoin="round"/></svg>
<svg style="left:1261px;top:757.6px;" width="32" height="28" viewBox="0 0 32 28"><path d="M3.4 1.2 H27.6 Q30 1.2 30 3.6 V16.6 Q30 19 27.6 19 H19.6 L15.2 25.4 V19 H3.4 Q1 19 1 16.6 V3.6 Q1 1.2 3.4 1.2Z" fill="none" stroke="#686868" stroke-width="1.8" stroke-linejoin="round"/><path d="M6 11.4 H26 M6 14.6 H15" stroke="#484848" stroke-width="1.4"/></svg>
<svg style="left:1304.8px;top:768px;" width="11.2" height="7.2" viewBox="0 0 11.2 7.2"><path d="M1 1 L5.6 6.2 L10.2 1" fill="none" stroke="#8a8a8a" stroke-width="2.6" stroke-linecap="round" stroke-linejoin="round"/></svg>
<div style="left:413.7px;top:801.2px;width:940.7px;height:1.7px;background:#000;"></div>
<div style="left:413.7px;top:802.9px;width:940.7px;height:675.2px;background:#1f1f1f;"></div>
<div style="left:426.6px;top:817.6px;width:914.4px;height:648px;background:#2b2b2b;border-radius:7px;"></div>
<div style="left:430px;top:866px;width:907.6px;height:594.8px;background:#171717;border-radius:6px;"></div>
<svg style="left:443.2px;top:831.4px;" width="18.2" height="22.6" viewBox="0 0 18.2 22.6"><defs><linearGradient id="aig" x1="0" y1="0" x2="0" y2="1"><stop offset="0" stop-color="#8790ac"/><stop offset="1" stop-color="#555c78"/></linearGradient><linearGradient id="aib" x1="0" y1="0" x2="1" y2="0"><stop offset="0" stop-color="#9c2414"/><stop offset=".5" stop-color="#e0702c"/><stop offset="1" stop-color="#c8a030"/></linearGradient></defs><rect x="5" y="0.6" width="9" height="4" rx="1" fill="#4c8a48"/><rect x="2.6" y="18" width="12.8" height="4.2" rx="1.2" fill="url(#aib)"/><rect x="2" y="19.4" width="14" height="1.4" fill="#3a2a22" opacity=".5"/><rect x="0.8" y="2.6" width="16.6" height="15.6" rx="4.2" fill="url(#aig)"/><path d="M3 2.2 L15.4 13.6 M15.2 2.2 L2.8 13.6" stroke="#b4bcd4" stroke-width="1" opacity=".75"/><path d="M5.8 8.4 Q9.1 14.6 12.4 8.4" fill="none" stroke="#2c324e" stroke-width="2"/></svg>
<div class="t m" style="left:477.4px;top:829px;height:30px;line-height:30px;font-size:19px;color:#e2e2e2;">名称未設定</div>
<div class="t " style="right:678px;top:828.6px;height:30px;line-height:30px;font-size:16.2px;color:#5d61d8;">追加</div>
<div style="left:845.6px;top:1082.3px;width:76.6px;height:76.6px;background:#323232;border-radius:11px;"></div>
<svg style="left:863.4px;top:1099.2px;" width="41.2" height="43.4" viewBox="0 0 41.2 43.4"><rect x="0.4" y="0.4" width="40.4" height="42.6" rx="1.6" fill="#d4d4d4"/><g fill="#222"><rect x="3.5" y="4.1" width="3.6" height="2.7"/><rect x="33.8" y="4.1" width="3.6" height="2.7"/><rect x="3.5" y="10.46" width="3.6" height="2.7"/><rect x="33.8" y="10.46" width="3.6" height="2.7"/><rect x="3.5" y="16.82" width="3.6" height="2.7"/><rect x="33.8" y="16.82" width="3.6" height="2.7"/><rect x="3.5" y="23.18" width="3.6" height="2.7"/><rect x="33.8" y="23.18" width="3.6" height="2.7"/><rect x="3.5" y="29.54" width="3.6" height="2.7"/><rect x="33.8" y="29.54" width="3.6" height="2.7"/><rect x="3.5" y="35.9" width="3.6" height="2.7"/><rect x="33.8" y="35.9" width="3.6" height="2.7"/></g><rect x="11.3" y="4.6" width="17.6" height="14" fill="#3c3c3c" stroke="#161616" stroke-width="1"/><rect x="11.3" y="24.1" width="17.6" height="14" fill="#3c3c3c" stroke="#161616" stroke-width="1"/></svg>
<div class="t m" style="left:684px;width:400px;text-align:center;top:1170.6px;height:30px;line-height:30px;font-size:19px;color:#e6e6e6;">ファイルを追加<span style="letter-spacing:.2px">...</span></div>
<div style="left:413.7px;top:1478px;width:940.7px;height:1.7px;background:#000;"></div>
<svg style="left:417.7px;top:1490.3px;" width="23" height="23" viewBox="0 0 23 23"><path d="M11.5 1.4 V21.6 M1.2 11.5 H21.8" stroke="#c4c4c4" stroke-width="2" stroke-linecap="round"/></svg>
<svg style="left:445.3px;top:1499.6px;" width="13" height="8" viewBox="0 0 13 8"><path d="M1 1 L6.5 7 L12 1" fill="none" stroke="#c8c8c8" stroke-width="2.2" stroke-linecap="round" stroke-linejoin="round"/></svg>
<div style="left:1189px;top:1486.4px;width:147px;height:29.2px;background:#2a2a2a;border-radius:5.5px;"></div>
<div class="t " style="left:1062.5px;width:400px;text-align:center;top:1486.2px;height:30px;line-height:30px;font-size:18.6px;color:#6c6c6c;">バッチを開始</div>
<div style="left:1547.2px;top:86.8px;width:253.4px;height:30.2px;background:#4b4b4b;border-radius:5.5px;overflow:hidden;"><div style="left:56.8px;top:0;width:82px;height:31px;background:linear-gradient(#666ad6,#4a4ea6)"></div></div>
<div class="t " style="left:1555px;top:86.6px;height:30px;line-height:30px;font-size:19.4px;color:#e2e2e2;">一般</div>
<div class="t m" style="left:1595px;width:100px;text-align:center;top:86.6px;height:30px;line-height:30px;font-size:19.4px;color:#ffffff;">ビデオ</div>
<div class="t " style="left:1683.4px;width:120px;text-align:center;top:86.6px;height:30px;line-height:30px;font-size:19.4px;color:#e2e2e2;">オーディオ</div>
<div style="left:1590.4px;top:70.3px;width:223.4px;height:60px;border:5px solid #e9422b;box-sizing:border-box;"></div>
<div style="left:1379.2px;top:142px;width:588.8px;height:203px;background:#2d2d2d;border-radius:3px;"></div>
<div class="bd" style="left:1399px;top:161px;width:24.8px;height:24.8px;background:#e4e4e4;border-radius:4px;"><span class="bn">4</span></div>
<div class="t " style="left:1442.6px;top:158.6px;height:30px;line-height:30px;font-size:19px;color:#e4e4e4;"><span class="a">H.<i>264</i> TC(<i>720</i>p/<i>15</i>Mbps)</span></div>
<div class="t " style="left:1442.8px;top:197.6px;height:30px;line-height:30px;font-size:16.1px;color:#dcdcdc;"><span class="a">MPEG-<i>4</i></span></div>
<div class="t m" style="left:1442.8px;top:233px;height:30px;line-height:30px;font-size:16.1px;color:#dcdcdc;">予想ファイルサイズ<span class="a">: <i>507.6</i> MB</span>（ソース<span class="a"><i>1</i></span>時間につき）</div>
<div class="t m" style="left:1442.8px;top:268.2px;height:30px;line-height:30px;font-size:16.1px;color:#dcdcdc;">ビデオ<span class="a">: H.<i>264</i>,</span> 自動<span class="a">,</span> プログレッシブ<span class="a">,</span> 自動 <span class="a">fps,</span> 自動</div>
<div class="t m" style="left:1442.8px;top:303.2px;height:30px;line-height:30px;font-size:16.1px;color:#dcdcdc;">オーディオ<span class="a">: AAC,</span> 自動<span class="a">,</span> 自動</div>
<div class="t " style="left:1396px;top:366.6px;height:30px;line-height:30px;font-size:17.4px;color:#dcdcdc;">ビデオのプロパティ</div>
<div style="left:1379.2px;top:402px;width:588.8px;height:775.2px;background:#2d2d2d;border-radius:3px;"></div>
<div class="t m" style="right:439.4px;top:417.4px;height:30px;line-height:30px;font-size:16.1px;color:#dedede;">フレームサイズ<span class="a">:</span></div>
<div style="left:1575px;top:418.4px;width:219.6px;height:25.6px;background:linear-gradient(#5e5e5e,#535353);border-radius:5.5px;box-shadow:0 0 0 .8px #222,inset 0 .8px 0 #6c6c6c;"></div>
<div style="left:1772.4px;top:421.7px;width:19.4px;height:19px;background:linear-gradient(#5c61e6,#4246c6);border-radius:4.5px;"></div>
<svg style="left:1777.1px;top:423.2px;" width="10" height="16" viewBox="0 0 10 16"><path d="M1.6 5.8 L5 2.2 L8.4 5.8 M1.6 10.2 L5 13.8 L8.4 10.2" fill="none" stroke="#f2f2f2" stroke-width="2" stroke-linecap="round" stroke-linejoin="round"/></svg>
<div class="t m" style="left:1585.2px;top:416.2px;height:30px;line-height:30px;font-size:15.5px;color:#f0f0f0;">自動</div>
<div style="left:1810px;top:418.9px;width:62.4px;height:24.8px;background:#1c1c1c;box-shadow:inset 0 0 0 1px #161616;"></div>
<div style="left:1879.8px;top:418.9px;width:62.4px;height:24.8px;background:#1c1c1c;box-shadow:inset 0 0 0 1px #161616;"></div>
<div class="t m" style="right:439.4px;top:455.8px;height:30px;line-height:30px;font-size:16.1px;color:#dedede;">ピクセルの</div>
<div class="t m" style="right:439.4px;top:478px;height:30px;line-height:30px;font-size:16.1px;color:#dedede;">アスペクト比<span class="a">:</span></div>
<div style="left:1575px;top:467.8px;width:219.6px;height:25.6px;background:linear-gradient(#4e4e4e,#474747);border-radius:5.5px;box-shadow:0 0 0 .8px #242424,inset 0 .8px 0 #585858;"></div>
<svg style="left:1777.1px;top:472.6px;" width="10" height="16" viewBox="0 0 10 16"><path d="M1.6 5.8 L5 2.2 L8.4 5.8 M1.6 10.2 L5 13.8 L8.4 10.2" fill="none" stroke="#d0d0d0" stroke-width="2" stroke-linecap="round" stroke-linejoin="round"/></svg>
<div class="t " style="left:1585.2px;top:465.6px;height:30px;line-height:30px;font-size:15.5px;color:#8c8c8c;letter-spacing:-.5px;">フレームサイズのデフォ<span class="e">…</span></div>
<div class="t m" style="right:439.4px;top:516.2px;height:30px;line-height:30px;font-size:16.1px;color:#dedede;">フレームレート<span class="a">:</span></div>
<div style="left:1575px;top:517.4px;width:219.6px;height:25.6px;background:linear-gradient(#5e5e5e,#535353);border-radius:5.5px;box-shadow:0 0 0 .8px #222,inset 0 .8px 0 #6c6c6c;"></div>
<div style="left:1772.4px;top:520.7px;width:19.4px;height:19px;background:linear-gradient(#5c61e6,#4246c6);border-radius:4.5px;"></div>
<svg style="left:1777.1px;top:522.2px;" width="10" height="16" viewBox="0 0 10 16"><path d="M1.6 5.8 L5 2.2 L8.4 5.8 M1.6 10.2 L5 13.8 L8.4 10.2" fill="none" stroke="#f2f2f2" stroke-width="2" stroke-linecap="round" stroke-linejoin="round"/></svg>
<div class="t m" style="left:1585.2px;top:515.2px;height:30px;line-height:30px;font-size:15.5px;color:#f0f0f0;">自動</div>
<div style="left:1810px;top:517.9px;width:78px;height:24.8px;background:#1c1c1c;box-shadow:inset 0 0 0 1px #161616;"></div>
<div class="t m" style="left:1901.2px;top:516px;height:30px;line-height:30px;font-size:16.1px;color:#dedede;"><span class="a">fps</span></div>
<div class="t m" style="right:439.4px;top:554.4px;height:30px;line-height:30px;font-size:16.1px;color:#dedede;">フィールドの順番<span class="a">:</span></div>
<div style="left:1575px;top:555.5px;width:219.6px;height:25.6px;background:linear-gradient(#4e4e4e,#474747);border-radius:5.5px;box-shadow:0 0 0 .8px #242424,inset 0 .8px 0 #585858;"></div>
<svg style="left:1777.1px;top:560.3px;" width="10" height="16" viewBox="0 0 10 16"><path d="M1.6 5.8 L5 2.2 L8.4 5.8 M1.6 10.2 L5 13.8 L8.4 10.2" fill="none" stroke="#d0d0d0" stroke-width="2" stroke-linecap="round" stroke-linejoin="round"/></svg>
<div class="t " style="left:1585.2px;top:553.3px;height:30px;line-height:30px;font-size:15.5px;color:#8c8c8c;">プログレッシブ</div>
<div class="t m" style="right:439.4px;top:592.6px;height:30px;line-height:30px;font-size:16.1px;color:#dedede;">色空間<span class="a">:</span></div>
<div style="left:1575px;top:593.7px;width:219.6px;height:25.6px;background:linear-gradient(#5e5e5e,#535353);border-radius:5.5px;box-shadow:0 0 0 .8px #222,inset 0 .8px 0 #6c6c6c;"></div>
<div style="left:1772.4px;top:597px;width:19.4px;height:19px;background:linear-gradient(#5c61e6,#4246c6);border-radius:4.5px;"></div>
<svg style="left:1777.1px;top:598.5px;" width="10" height="16" viewBox="0 0 10 16"><path d="M1.6 5.8 L5 2.2 L8.4 5.8 M1.6 10.2 L5 13.8 L8.4 10.2" fill="none" stroke="#f2f2f2" stroke-width="2" stroke-linecap="round" stroke-linejoin="round"/></svg>
<div class="t m" style="left:1585.2px;top:591.5px;height:30px;line-height:30px;font-size:15.5px;color:#f0f0f0;">自動</div>
<div class="t m" style="right:439.4px;top:630.8px;height:30px;line-height:30px;font-size:16.1px;color:#dedede;"><span class="a">RAW</span>からログ<span class="a">:</span></div>
<div style="left:1575px;top:631.9px;width:219.6px;height:25.6px;background:linear-gradient(#5e5e5e,#535353);border-radius:5.5px;box-shadow:0 0 0 .8px #222,inset 0 .8px 0 #6c6c6c;"></div>
<div style="left:1772.4px;top:635.2px;width:19.4px;height:19px;background:linear-gradient(#5c61e6,#4246c6);border-radius:4.5px;"></div>
<svg style="left:1777.1px;top:636.7px;" width="10" height="16" viewBox="0 0 10 16"><path d="M1.6 5.8 L5 2.2 L8.4 5.8 M1.6 10.2 L5 13.8 L8.4 10.2" fill="none" stroke="#f2f2f2" stroke-width="2" stroke-linecap="round" stroke-linejoin="round"/></svg>
<div class="t m" style="left:1585.2px;top:629.7px;height:30px;line-height:30px;font-size:15.5px;color:#f0f0f0;">自動</div>
<div class="t m" style="right:439.4px;top:669px;height:30px;line-height:30px;font-size:16.1px;color:#dedede;">カメラの<span class="a">LUT:</span></div>
<div style="left:1575px;top:670.1px;width:219.6px;height:25.6px;background:linear-gradient(#5e5e5e,#535353);border-radius:5.5px;box-shadow:0 0 0 .8px #222,inset 0 .8px 0 #6c6c6c;"></div>
<div style="left:1772.4px;top:673.4px;width:19.4px;height:19px;background:linear-gradient(#5c61e6,#4246c6);border-radius:4.5px;"></div>
<svg style="left:1777.1px;top:674.9px;" width="10" height="16" viewBox="0 0 10 16"><path d="M1.6 5.8 L5 2.2 L8.4 5.8 M1.6 10.2 L5 13.8 L8.4 10.2" fill="none" stroke="#f2f2f2" stroke-width="2" stroke-linecap="round" stroke-linejoin="round"/></svg>
<div class="t m" style="left:1585.2px;top:667.9px;height:30px;line-height:30px;font-size:15.5px;color:#f0f0f0;">自動</div>
<div class="t m" style="right:439.4px;top:704.4px;height:30px;line-height:30px;font-size:16.1px;color:#dedede;">コーデック<span class="a">:</span></div>
<div style="left:1572.6px;top:709px;width:21px;height:21px;background:linear-gradient(#5c61e6,#4246c6);border-radius:50%;box-shadow:0 0 0 .8px #1e1e1e;"></div>
<div style="left:1579px;top:715.4px;width:8.2px;height:8.2px;background:#ececff;border-radius:50%;"></div>
<div class="t m" style="left:1598.6px;top:705px;height:30px;line-height:30px;font-size:16.1px;color:#e2e2e2;"><span class="a">H.<i>264</i></span></div>
<div style="left:1669.4px;top:709px;width:21px;height:21px;background:linear-gradient(#5c5c5c,#4a4a4a);border-radius:50%;box-shadow:0 0 0 .8px #1e1e1e,inset 0 .8px 0 #6a6a6a;"></div>
<div class="t m" style="left:1696px;top:705px;height:30px;line-height:30px;font-size:16.1px;color:#e2e2e2;"><span class="a">HEVC</span></div>
<div class="t m" style="right:439.4px;top:742.4px;height:30px;line-height:30px;font-size:16.1px;color:#dedede;">エンコーダのタイプ<span class="a">:</span></div>
<div style="left:1575px;top:743.3px;width:219.6px;height:25.6px;background:linear-gradient(#4e4e4e,#474747);border-radius:5.5px;box-shadow:0 0 0 .8px #242424,inset 0 .8px 0 #585858;"></div>
<svg style="left:1777.1px;top:748.1px;" width="10" height="16" viewBox="0 0 10 16"><path d="M1.6 5.8 L5 2.2 L8.4 5.8 M1.6 10.2 L5 13.8 L8.4 10.2" fill="none" stroke="#d0d0d0" stroke-width="2" stroke-linecap="round" stroke-linejoin="round"/></svg>
<div class="t " style="left:1585.2px;top:741.1px;height:30px;line-height:30px;font-size:15.5px;color:#8c8c8c;">デフォルト</div>
<div class="t m" style="right:439.4px;top:780.6px;height:30px;line-height:30px;font-size:16.1px;color:#dedede;">プロファイル<span class="a">:</span></div>
<div style="left:1575px;top:781.5px;width:219.6px;height:25.6px;background:linear-gradient(#5e5e5e,#535353);border-radius:5.5px;box-shadow:0 0 0 .8px #222,inset 0 .8px 0 #6c6c6c;"></div>
<div style="left:1772.4px;top:784.8px;width:19.4px;height:19px;background:linear-gradient(#5c61e6,#4246c6);border-radius:4.5px;"></div>
<svg style="left:1777.1px;top:786.3px;" width="10" height="16" viewBox="0 0 10 16"><path d="M1.6 5.8 L5 2.2 L8.4 5.8 M1.6 10.2 L5 13.8 L8.4 10.2" fill="none" stroke="#f2f2f2" stroke-width="2" stroke-linecap="round" stroke-linejoin="round"/></svg>
<div class="t m" style="left:1585.2px;top:779.3px;height:30px;line-height:30px;font-size:15.5px;color:#f0f0f0;">高</div>
<div class="t m" style="right:439.4px;top:818.8px;height:30px;line-height:30px;font-size:16.1px;color:#dedede;">エントロピーモード<span class="a">:</span></div>
<div style="left:1575px;top:819.7px;width:219.6px;height:25.6px;background:linear-gradient(#5e5e5e,#535353);border-radius:5.5px;box-shadow:0 0 0 .8px #222,inset 0 .8px 0 #6c6c6c;"></div>
<div style="left:1772.4px;top:823px;width:19.4px;height:19px;background:linear-gradient(#5c61e6,#4246c6);border-radius:4.5px;"></div>
<svg style="left:1777.1px;top:824.5px;" width="10" height="16" viewBox="0 0 10 16"><path d="M1.6 5.8 L5 2.2 L8.4 5.8 M1.6 10.2 L5 13.8 L8.4 10.2" fill="none" stroke="#f2f2f2" stroke-width="2" stroke-linecap="round" stroke-linejoin="round"/></svg>
<div class="t m" style="left:1585.2px;top:817.5px;height:30px;line-height:30px;font-size:15.5px;color:#f0f0f0;"><span class="a">CABAC</span></div>
<div class="t m" style="right:439.4px;top:858.8px;height:30px;line-height:30px;font-size:16.1px;color:#dedede;">キーフレームの間隔<span class="a">:</span></div>
<div style="left:1574.4px;top:859.4px;width:78px;height:27.6px;background:#181818;box-shadow:inset 0 0 0 1px #161616;"></div>
<div class="t m" style="left:1580.4px;top:858.8px;height:30px;line-height:30px;font-size:16.1px;color:#7a7a7a;"><span class="a"><i>0</i></span></div>
<div style="left:1666.2px;top:864.6px;width:18.4px;height:18.4px;background:linear-gradient(#5c61e6,#4246c6);border-radius:4.5px;box-shadow:0 0 0 .8px #1e1e1e;"></div>
<svg style="left:1668.8px;top:867.4px;" width="14" height="13" viewBox="0 0 14 13"><path d="M2 7 L5.4 10.8 L11.4 1.8" fill="none" stroke="#fff" stroke-width="2" stroke-linecap="round" stroke-linejoin="round"/></svg>
<div class="t m" style="left:1691.8px;top:859px;height:30px;line-height:30px;font-size:16.1px;color:#e8e8e8;">自動</div>
<div class="t m" style="right:439.4px;top:900.6px;height:30px;line-height:30px;font-size:16.1px;color:#dedede;">データレート<span class="a">:</span></div>
<div style="left:1575px;top:902.5px;width:219.6px;height:25.6px;background:linear-gradient(#5e5e5e,#535353);border-radius:5.5px;box-shadow:0 0 0 .8px #222,inset 0 .8px 0 #6c6c6c;"></div>
<div style="left:1772.4px;top:905.8px;width:19.4px;height:19px;background:linear-gradient(#5c61e6,#4246c6);border-radius:4.5px;"></div>
<svg style="left:1777.1px;top:907.3px;" width="10" height="16" viewBox="0 0 10 16"><path d="M1.6 5.8 L5 2.2 L8.4 5.8 M1.6 10.2 L5 13.8 L8.4 10.2" fill="none" stroke="#f2f2f2" stroke-width="2" stroke-linecap="round" stroke-linejoin="round"/></svg>
<div class="t m" style="left:1585.2px;top:900.3px;height:30px;line-height:30px;font-size:15.5px;color:#f0f0f0;"><span class="a">Web</span>公開</div>
<div style="left:1578px;top:950.6px;width:216px;height:3px;background:#262626;border-radius:1.5px;"></div>
<svg style="left:1576.2px;top:945.2px;" width="19" height="20" viewBox="0 0 19 20"><path d="M2 1 H17 Q18 1 18 2 V11 L9.5 19 L1 11 V2 Q1 1 2 1Z" fill="#4c4c4c"/></svg>
<div style="left:1583.2px;top:961px;width:1.3px;height:5.6px;background:#565656;"></div>
<div style="left:1603.5px;top:961px;width:1.3px;height:5.6px;background:#565656;"></div>
<div style="left:1623.8px;top:961px;width:1.3px;height:5.6px;background:#565656;"></div>
<div style="left:1644.1px;top:961px;width:1.3px;height:5.6px;background:#565656;"></div>
<div style="left:1664.4px;top:961px;width:1.3px;height:5.6px;background:#565656;"></div>
<div style="left:1684.7px;top:961px;width:1.3px;height:5.6px;background:#565656;"></div>
<div style="left:1705px;top:961px;width:1.3px;height:5.6px;background:#565656;"></div>
<div style="left:1725.3px;top:961px;width:1.3px;height:5.6px;background:#565656;"></div>
<div style="left:1745.6px;top:961px;width:1.3px;height:5.6px;background:#565656;"></div>
<div style="left:1765.9px;top:961px;width:1.3px;height:5.6px;background:#565656;"></div>
<div style="left:1786.2px;top:961px;width:1.3px;height:5.6px;background:#565656;"></div>
<div style="left:1810px;top:942.2px;width:87px;height:27.8px;background:#181818;box-shadow:inset 0 0 0 1px #161616;"></div>
<div class="t m" style="left:1816px;top:941.7px;height:30px;line-height:30px;font-size:16.1px;color:#6e6e6e;"><span class="a"><i>1000</i></span></div>
<div class="t m" style="left:1906.2px;top:942.4px;height:30px;line-height:30px;font-size:16.1px;color:#e2e2e2;"><span class="a">Kbps</span></div>
<div class="t m" style="left:1573px;top:970.6px;height:30px;line-height:30px;font-size:16.1px;color:#e2e2e2;"><span class="a"><i>64</i></span></div>
<div class="t m" style="left:1750px;top:970.6px;height:30px;line-height:30px;font-size:16.1px;color:#e2e2e2;"><span class="a"><i>100,000</i></span></div>
<div style="left:1573.6px;top:1010.8px;width:18.4px;height:18.4px;background:linear-gradient(#5a5a5a,#4c4c4c);border-radius:4.5px;box-shadow:0 0 0 .8px #1e1e1e,inset 0 .8px 0 #6a6a6a;"></div>
<div class="t m" style="left:1599.4px;top:1005.2px;height:30px;line-height:30px;font-size:16.1px;color:#e2e2e2;">マルチパス</div>
<div style="left:1573.6px;top:1045.6px;width:18.4px;height:18.4px;background:#3a3a3a;border-radius:4.5px;box-shadow:0 0 0 .8px #242424;"></div>
<div class="t m" style="left:1599.4px;top:1040.4px;height:30px;line-height:30px;font-size:16.1px;color:#868686;"><span class="a">Dolby Vision <i>8.4</i></span>のメタデータを</div>
<div class="t m" style="left:1599.4px;top:1062.4px;height:30px;line-height:30px;font-size:16.1px;color:#868686;">含める</div>
<div style="left:1573.6px;top:1103px;width:18.4px;height:18.4px;background:linear-gradient(#5c61e6,#4246c6);border-radius:4.5px;box-shadow:0 0 0 .8px #1e1e1e;"></div>
<svg style="left:1576.2px;top:1105.8px;" width="14" height="13" viewBox="0 0 14 13"><path d="M2 7 L5.4 10.8 L11.4 1.8" fill="none" stroke="#fff" stroke-width="2" stroke-linecap="round" stroke-linejoin="round"/></svg>
<div class="t m" style="left:1599.4px;top:1097.4px;height:30px;line-height:30px;font-size:16.1px;color:#e8e8e8;">フレームの並べ替えを許可</div>
<div class="t m" style="right:439.4px;top:1135.6px;height:30px;line-height:30px;font-size:16.1px;color:#dedede;"><span class="a"><i>360</i></span>°メタデータ<span class="a">:</span></div>
<div style="left:1575px;top:1136.4px;width:219.6px;height:25.6px;background:linear-gradient(#5e5e5e,#535353);border-radius:5.5px;box-shadow:0 0 0 .8px #222,inset 0 .8px 0 #6c6c6c;"></div>
<div style="left:1772.4px;top:1139.7px;width:19.4px;height:19px;background:linear-gradient(#5c61e6,#4246c6);border-radius:4.5px;"></div>
<svg style="left:1777.1px;top:1141.2px;" width="10" height="16" viewBox="0 0 10 16"><path d="M1.6 5.8 L5 2.2 L8.4 5.8 M1.6 10.2 L5 13.8 L8.4 10.2" fill="none" stroke="#f2f2f2" stroke-width="2" stroke-linecap="round" stroke-linejoin="round"/></svg>
<div class="t m" style="left:1585.2px;top:1134.2px;height:30px;line-height:30px;font-size:15.5px;color:#f0f0f0;">自動</div>
<div class="t " style="left:1396px;top:1198.6px;height:30px;line-height:30px;font-size:17.4px;color:#dcdcdc;">クロップとパディング</div>
<div style="left:1379.2px;top:1235px;width:588.8px;height:238.2px;background:#2d2d2d;border-radius:3px;"></div>
<div class="t m" style="right:439.4px;top:1250.4px;height:30px;line-height:30px;font-size:16.1px;color:#dedede;">クロップ<span class="a">:</span></div>
<div style="left:1575px;top:1252.3px;width:219.6px;height:25.6px;background:linear-gradient(#5e5e5e,#535353);border-radius:5.5px;box-shadow:0 0 0 .8px #222,inset 0 .8px 0 #6c6c6c;"></div>
<div style="left:1772.4px;top:1255.6px;width:19.4px;height:19px;background:linear-gradient(#5c61e6,#4246c6);border-radius:4.5px;"></div>
<svg style="left:1777.1px;top:1257.1px;" width="10" height="16" viewBox="0 0 10 16"><path d="M1.6 5.8 L5 2.2 L8.4 5.8 M1.6 10.2 L5 13.8 L8.4 10.2" fill="none" stroke="#f2f2f2" stroke-width="2" stroke-linecap="round" stroke-linejoin="round"/></svg>
<div class="t m" style="left:1585.2px;top:1250.1px;height:30px;line-height:30px;font-size:15.5px;color:#f0f0f0;">カスタム</div>
<div class="t m" style="left:1578.6px;width:60px;text-align:center;top:1288.6px;height:30px;line-height:30px;font-size:16.1px;color:#e2e2e2;">上<span class="a">:</span></div>
<div style="left:1574.4px;top:1318.6px;width:68.4px;height:27.8px;background:#1c1c1c;box-shadow:inset 0 0 0 1px #161616;"></div>
<div class="t m" style="left:1574.4px;width:68.4px;text-align:center;top:1318.1px;height:30px;line-height:30px;font-size:16.1px;color:#f0f0f0;"><span class="a"><i>0</i></span></div>
<div class="t m" style="left:1681.4px;width:60px;text-align:center;top:1288.6px;height:30px;line-height:30px;font-size:16.1px;color:#e2e2e2;">下<span class="a">:</span></div>
<div style="left:1677.2px;top:1318.6px;width:68.4px;height:27.8px;background:#1c1c1c;box-shadow:inset 0 0 0 1px #161616;"></div>
<div class="t m" style="left:1677.2px;width:68.4px;text-align:center;top:1318.1px;height:30px;line-height:30px;font-size:16.1px;color:#f0f0f0;"><span class="a"><i>0</i></span></div>
<div class="t m" style="left:1784.8px;width:60px;text-align:center;top:1288.6px;height:30px;line-height:30px;font-size:16.1px;color:#e2e2e2;">左<span class="a">:</span></div>
<div style="left:1780.6px;top:1318.6px;width:68.4px;height:27.8px;background:#1c1c1c;box-shadow:inset 0 0 0 1px #161616;"></div>
<div class="t m" style="left:1780.6px;width:68.4px;text-align:center;top:1318.1px;height:30px;line-height:30px;font-size:16.1px;color:#f0f0f0;"><span class="a"><i>0</i></span></div>
<div class="t m" style="left:1887.4px;width:60px;text-align:center;top:1288.6px;height:30px;line-height:30px;font-size:16.1px;color:#e2e2e2;">右<span class="a">:</span></div>
<div style="left:1883.2px;top:1318.6px;width:68.4px;height:27.8px;background:#1c1c1c;box-shadow:inset 0 0 0 1px #161616;"></div>
<div class="t m" style="left:1883.2px;width:68.4px;text-align:center;top:1318.1px;height:30px;line-height:30px;font-size:16.1px;color:#f0f0f0;"><span class="a"><i>0</i></span></div>
<div class="t m" style="left:1578.6px;width:60px;text-align:center;top:1398.4px;height:30px;line-height:30px;font-size:16.1px;color:#e2e2e2;">上<span class="a">:</span></div>
<div style="left:1574.4px;top:1428.4px;width:68.4px;height:27.8px;background:#1c1c1c;box-shadow:inset 0 0 0 1px #161616;"></div>
<div class="t m" style="left:1574.4px;width:68.4px;text-align:center;top:1427.9px;height:30px;line-height:30px;font-size:16.1px;color:#f0f0f0;"><span class="a"><i>0</i></span></div>
<div class="t m" style="left:1681.4px;width:60px;text-align:center;top:1398.4px;height:30px;line-height:30px;font-size:16.1px;color:#e2e2e2;">下<span class="a">:</span></div>
<div style="left:1677.2px;top:1428.4px;width:68.4px;height:27.8px;background:#1c1c1c;box-shadow:inset 0 0 0 1px #161616;"></div>
<div class="t m" style="left:1677.2px;width:68.4px;text-align:center;top:1427.9px;height:30px;line-height:30px;font-size:16.1px;color:#f0f0f0;"><span class="a"><i>0</i></span></div>
<div class="t m" style="left:1784.8px;width:60px;text-align:center;top:1398.4px;height:30px;line-height:30px;font-size:16.1px;color:#e2e2e2;">左<span class="a">:</span></div>
<div style="left:1780.6px;top:1428.4px;width:68.4px;height:27.8px;background:#1c1c1c;box-shadow:inset 0 0 0 1px #161616;"></div>
<div class="t m" style="left:1780.6px;width:68.4px;text-align:center;top:1427.9px;height:30px;line-height:30px;font-size:16.1px;color:#f0f0f0;"><span class="a"><i>0</i></span></div>
<div class="t m" style="left:1887.4px;width:60px;text-align:center;top:1398.4px;height:30px;line-height:30px;font-size:16.1px;color:#e2e2e2;">右<span class="a">:</span></div>
<div style="left:1883.2px;top:1428.4px;width:68.4px;height:27.8px;background:#1c1c1c;box-shadow:inset 0 0 0 1px #161616;"></div>
<div class="t m" style="left:1883.2px;width:68.4px;text-align:center;top:1427.9px;height:30px;line-height:30px;font-size:16.1px;color:#f0f0f0;"><span class="a"><i>0</i></span></div>
<div class="t m" style="right:439.4px;top:1360.4px;height:30px;line-height:30px;font-size:16.1px;color:#dedede;">パディング<span class="a">:</span></div>
<div style="left:1575px;top:1362.4px;width:219.6px;height:25.6px;background:linear-gradient(#5e5e5e,#535353);border-radius:5.5px;box-shadow:0 0 0 .8px #222,inset 0 .8px 0 #6c6c6c;"></div>
<div style="left:1772.4px;top:1365.7px;width:19.4px;height:19px;background:linear-gradient(#5c61e6,#4246c6);border-radius:4.5px;"></div>
<svg style="left:1777.1px;top:1367.2px;" width="10" height="16" viewBox="0 0 10 16"><path d="M1.6 5.8 L5 2.2 L8.4 5.8 M1.6 10.2 L5 13.8 L8.4 10.2" fill="none" stroke="#f2f2f2" stroke-width="2" stroke-linecap="round" stroke-linejoin="round"/></svg>
<div class="t m" style="left:1585.2px;top:1360.2px;height:30px;line-height:30px;font-size:15.5px;color:#f0f0f0;"><span class="a"><i>4</i></span>×<span class="a"><i>3</i> <i>1.33:1</i></span></div>
<div class="t " style="left:1396px;top:1495px;height:30px;line-height:30px;font-size:17.4px;color:#dcdcdc;">品質</div>
</div>
<div id="edge"></div>
</body></html>
